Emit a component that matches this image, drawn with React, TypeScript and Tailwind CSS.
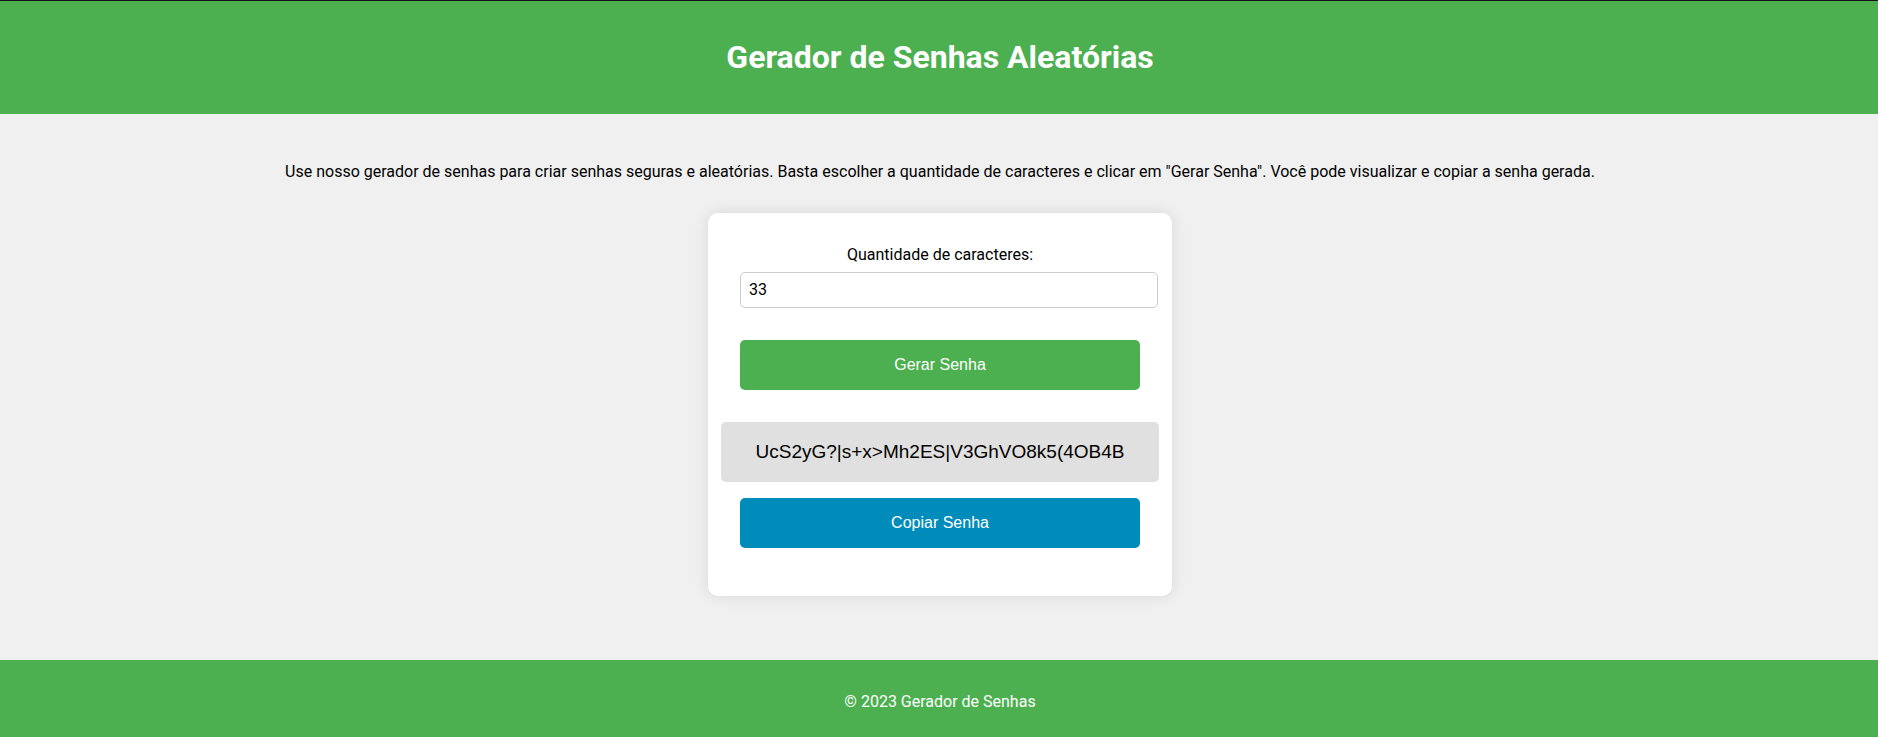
import { useState } from "react";

const BUTTON =
  "w-full cursor-pointer rounded-[5px] p-4 font-['Liberation_Sans',Arial,sans-serif] text-base leading-[18px] text-white";

const CHARS =
  "ABCDEFGHIJKLMNOPQRSTUVWXYZabcdefghijklmnopqrstuvwxyz0123456789!@#$%&*()+?><|";

function createPassword(length: number): string {
  let result = "";
  for (let i = 0; i < length; i++) {
    result += CHARS[Math.floor(Math.random() * CHARS.length)];
  }
  return result;
}

export default function App() {
  const [length, setLength] = useState("33");
  const [password, setPassword] = useState("UcS2yG?|s+x>Mh2ES|V3GhVO8k5(4OB4B");

  return (
    <div className="flex min-h-screen flex-col border-t border-[#121212] bg-[#f0f0f0] text-center font-[Roboto,sans-serif] text-base leading-5 text-black">
      <header className="bg-[#4caf50] pt-9 pr-[30px] pb-9 pl-8 text-white">
        <h1 className="text-[32px] leading-[41px] font-bold">Gerador de Senhas Aleatórias</h1>
      </header>

      <main className="flex grow flex-col items-center pt-12 pr-[30px] pb-16 pl-8">
        <p>
          Use nosso gerador de senhas para criar senhas seguras e aleatórias. Basta escolher a
          quantidade de caracteres e clicar em "Gerar Senha". Você pode visualizar e copiar a senha
          gerada.
        </p>

        <section className="mt-[31px] flex w-full max-w-[464px] flex-col items-center rounded-[10px] bg-white px-8 pt-8 pb-12 shadow-[0_0_16px_rgba(0,0,0,0.1)]">
          <label htmlFor="length">Quantidade de caracteres:</label>
          <input
            id="length"
            type="text"
            inputMode="numeric"
            value={length}
            onChange={(event) => setLength(event.target.value)}
            className="mt-[7px] box-content h-[18px] w-full self-start rounded-[5px] border border-[#cccccc] bg-white p-2 leading-[18px]"
          />

          <button
            type="button"
            onClick={() => setPassword(createPassword(Number(length) || 0))}
            className={`mt-8 bg-[#4caf50] ${BUTTON}`}
          >
            Gerar Senha
          </button>

          <output
            htmlFor="length"
            className="mt-8 block w-max rounded-[5px] bg-[#e0e0e0] px-[35px] py-5 font-['Liberation_Sans',Arial,sans-serif] text-[19px] leading-5"
          >
            {password}
          </output>

          <button
            type="button"
            onClick={() => navigator.clipboard.writeText(password)}
            className={`mt-4 bg-[#008cba] ${BUTTON}`}
          >
            Copiar Senha
          </button>
        </section>
      </main>

      <footer className="bg-[#4caf50] pt-8 pr-[30px] pb-[25px] pl-8 text-white">
        <p>© 2023 Gerador de Senhas</p>
      </footer>
    </div>
  );
}
